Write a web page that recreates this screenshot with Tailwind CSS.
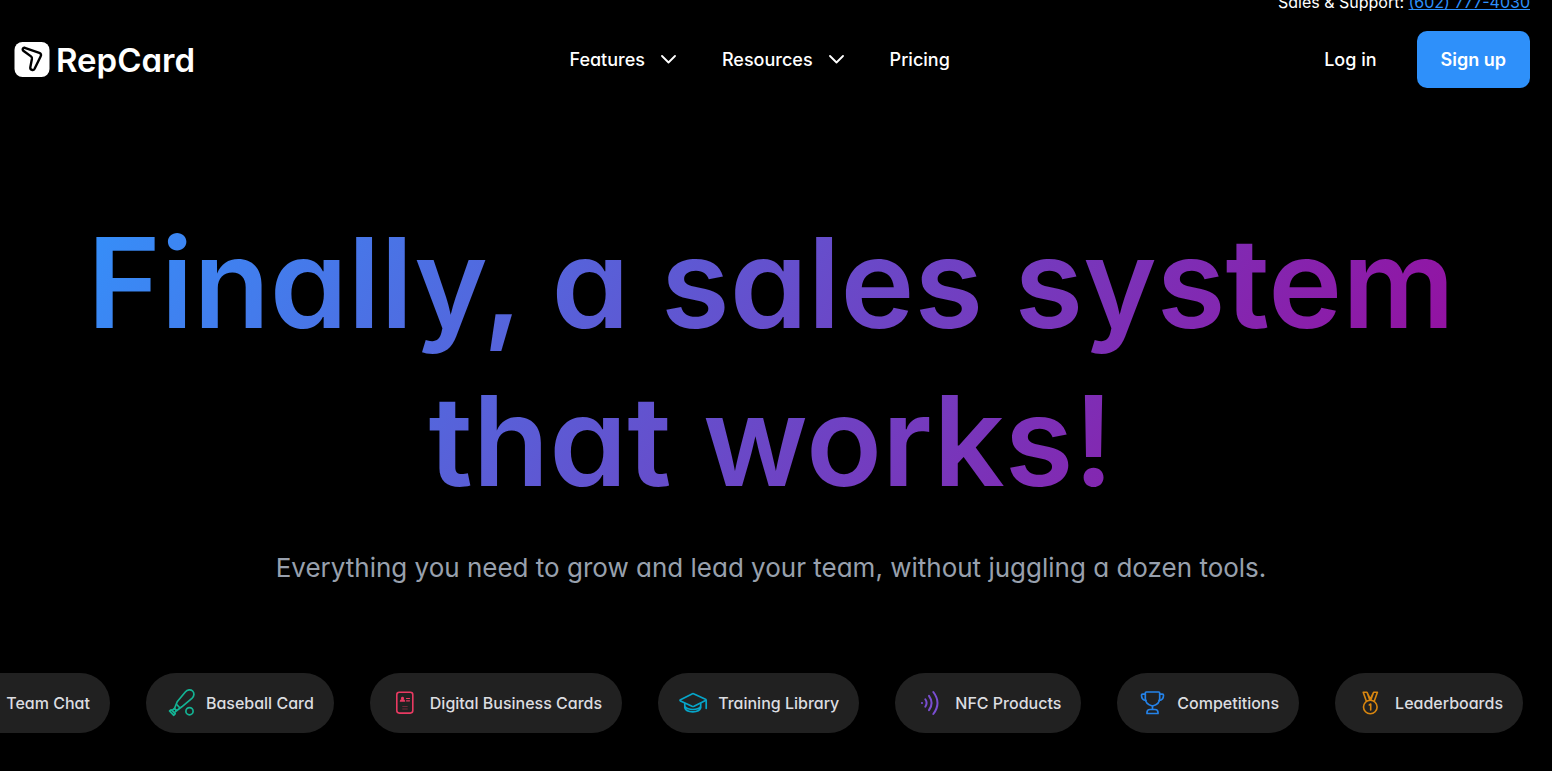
<!DOCTYPE html>
<html lang="en">
<head>
    <meta charset="UTF-8">
    <meta name="viewport" content="width=device-width, initial-scale=1.0">
    <title>RepCard</title>
    <script src="https://cdn.jsdelivr.net/npm/@tailwindcss/browser@4"></script>
</head>
<body class="min-h-screen overflow-x-hidden bg-black font-['Inter',sans-serif] text-white [font-feature-settings:'cv11']">

    <!-- Contact bar -->
    <div class="flex h-3 items-end justify-end overflow-hidden pr-[22px] text-base leading-5">
        <p>Sales &amp; Support: <a href="tel:6027774030" class="text-[#2e90fa] underline">(602) 777-4030</a></p>
    </div>

    <!-- Header -->
    <header class="mt-[19px] flex items-center justify-between pl-[14px] pr-[22px]">
        <a href="#" class="flex items-center gap-[6px]">
            <svg class="size-9" viewBox="0 0 36 36" fill="none" aria-hidden="true">
                <rect x="0.5" y="0" width="35" height="35" rx="8" fill="#fff"/>
                <path d="M9.3 8.8C8 7.6 8.800 5.400 10.800 5.800L25.300 10.800C26.900 11.400 27.500 12.800 26.700 14.200L20.600 26.800C19.400 29 16 28 16.300 25.400L17.900 17C18.100 15.800 17.800 15 17 14.400Z" stroke="#000" stroke-width="2.4" stroke-linejoin="round"/>
            </svg>
            <span class="text-[33px] font-semibold leading-9">RepCard</span>
        </a>

        <nav class="flex items-center gap-[46px] text-lg font-medium leading-6">
            <button type="button" class="flex items-center gap-4">
                Features
                <svg class="h-[9px] w-[15px]" viewBox="0 0 15 9" fill="none" stroke="currentColor" stroke-width="1.8" stroke-linecap="round" stroke-linejoin="round" aria-hidden="true"><path d="M1 1l6.500 6.500L14 1"/></svg>
            </button>
            <button type="button" class="flex items-center gap-4">
                Resources
                <svg class="h-[9px] w-[15px]" viewBox="0 0 15 9" fill="none" stroke="currentColor" stroke-width="1.8" stroke-linecap="round" stroke-linejoin="round" aria-hidden="true"><path d="M1 1l6.500 6.500L14 1"/></svg>
            </button>
            <a href="#">Pricing</a>
        </nav>

        <div class="flex items-center gap-10 text-lg font-medium leading-6">
            <a href="#">Log in</a>
            <a href="#" class="flex h-[57px] items-center rounded-[10px] bg-[#2e90fa] px-6 font-semibold">Sign up</a>
        </div>
    </header>

    <!-- Hero -->
    <main>
        <section class="mt-[116px] pl-[70px] pr-20 text-center">
            <h1 class="mx-auto w-fit bg-linear-[125deg,#3490fa,#9c0699] bg-clip-text text-[125px] font-semibold leading-[158px] text-transparent">Finally, a sales system<br>that works!</h1>
            <p class="mt-7 text-[26px] leading-10 text-[#98a0ad]">Everything you need to grow and lead your team, without juggling a dozen tools.</p>
        </section>

        <!-- Feature strip -->
        <ul class="mt-[85px] flex justify-end gap-9 overflow-hidden pr-[29px] text-base font-medium leading-6 text-[#dcdde0]">
            <li class="flex h-[60px] shrink-0 items-center gap-[10px] rounded-full bg-[#212121] px-5">
                <svg class="size-[30px]" viewBox="0 0 30 30" fill="none" stroke="#2e90fa" stroke-width="1.500" aria-hidden="true"><path d="M4 5h22v16H13l-6 5v-5H4z"/></svg>
                Team Chat
            </li>
            <li class="flex h-[60px] shrink-0 items-center gap-[10px] rounded-full bg-[#212121] px-5">
                <svg class="size-[30px]" viewBox="0 0 30 30" fill="none" stroke="#14b394" stroke-width="1.700" stroke-linecap="round" stroke-linejoin="round" aria-hidden="true">
                    <path d="M8.500 20.500L11.200 13.800L19.300 4C21.400 1.500 24.600 1.100 26.600 3C28.600 5 28.300 8.100 25.900 10.300L15.800 18.800L10.500 22.700Z"/>
                    <path d="M8.500 20.500L10.500 22.700L8.300 24.800L6 22.500ZM3.500 23L5.300 21.800L9.200 25.600L7.800 27.300ZM11.200 17L13.500 19.500"/>
                    <circle cx="23.500" cy="23.200" r="3.600"/>
                </svg>
                Baseball Card
            </li>
            <li class="flex h-[60px] shrink-0 items-center gap-[10px] rounded-full bg-[#212121] px-5">
                <svg class="size-[30px]" viewBox="0 0 30 30" fill="none" stroke="#e93a62" stroke-width="1.600" stroke-linecap="round" aria-hidden="true">
                    <rect x="6.800" y="4.300" width="16" height="20.800" rx="2.500"/>
                    <path d="M16.500 10.500h3M16.500 12.800h3" stroke-width="1.200"/>
                    <path d="M12.500 8.800a1.400 1.400 0 0 1 1 2.500c1 .4 1.700 1.100 1.700 2.400h-5.400c0-1.300.7-2 1.700-2.400a1.400 1.400 0 0 1 1-2.500z" fill="#e93a62" stroke="none"/>
                    <path d="M12.700 18.500h4.600M12.700 21h4.600" stroke-width="1" opacity=".4"/>
                </svg>
                Digital Business Cards
            </li>
            <li class="flex h-[60px] shrink-0 items-center gap-[10px] rounded-full bg-[#212121] px-5">
                <svg class="size-[30px]" viewBox="0 0 30 30" fill="none" stroke="#06a5c9" stroke-width="1.700" stroke-linecap="round" stroke-linejoin="round" aria-hidden="true">
                    <path d="M14.500 5.700Q15 5.500 15.500 5.700L27.500 11.200Q28.500 11.800 27.500 12.400L16 18.300Q15 18.700 14 18.300L2.500 12.900Q1.500 12.300 2.500 11.700Z"/>
                    <path d="M6.800 15.500v4.300C7.500 22.400 10.700 23.800 14.800 23.800S22 22.400 22.700 19.800v-4.300M6.900 18.500c2 2.300 5 3 8 3s6-.7 7.800-3M28.200 12.500v7.800"/>
                </svg>
                Training Library
            </li>
            <li class="flex h-[60px] shrink-0 items-center gap-[10px] rounded-full bg-[#212121] px-5">
                <svg class="size-[30px]" viewBox="0 0 30 30" fill="none" stroke="#7a4ed2" stroke-width="2" stroke-linecap="round" aria-hidden="true">
                    <circle cx="7" cy="15" r="1.100" fill="#7a4ed2" stroke="none"/>
                    <path d="M10.300 11.300q2.600 3.700 0 7.400M14 7.800q5.200 7.200 0 14.400M18.300 4q8.400 11 0 22"/>
                </svg>
                NFC Products
            </li>
            <li class="flex h-[60px] shrink-0 items-center gap-[10px] rounded-full bg-[#212121] px-5">
                <svg class="size-[30px]" viewBox="0 0 30 30" fill="none" stroke="#2482e8" stroke-width="1.700" stroke-linecap="round" stroke-linejoin="round" aria-hidden="true">
                    <path d="M8.300 5Q8.300 4 9.300 4H21.700Q22.700 4 22.700 5V10.500C22.700 14.500 19.500 17 15.500 18C11.500 17 8.300 14.500 8.300 10.500Z"/>
                    <path d="M8.300 6.200H5.500Q4.500 6.200 4.500 7.200C4.500 10 6 12.200 9 12.500M22.700 6.200h2.800Q26.500 6.200 26.500 7.200C26.500 10 25 12.200 22 12.500M15.500 18v3.300M10 25.500V24.500Q10 21.500 13 21.500H18Q21 21.500 21 24.500V25.500Z"/>
                </svg>
                Competitions
            </li>
            <li class="flex h-[60px] shrink-0 items-center gap-[10px] rounded-full bg-[#212121] px-5">
                <svg class="size-[30px]" viewBox="0 0 30 30" fill="none" stroke="#d8860f" stroke-width="1.600" stroke-linecap="round" stroke-linejoin="round" aria-hidden="true">
                    <circle cx="15.300" cy="19" r="6.800"/>
                    <path d="M11.300 13L8.200 4.300H12L15.300 11L18.600 4.300H22.400L19.300 13M12.200 4.800L14.800 12M18.400 4.800L15.800 12M14.300 17L15.700 16V22"/>
                </svg>
                Leaderboards
            </li>
        </ul>
    </main>

</body>
</html>
